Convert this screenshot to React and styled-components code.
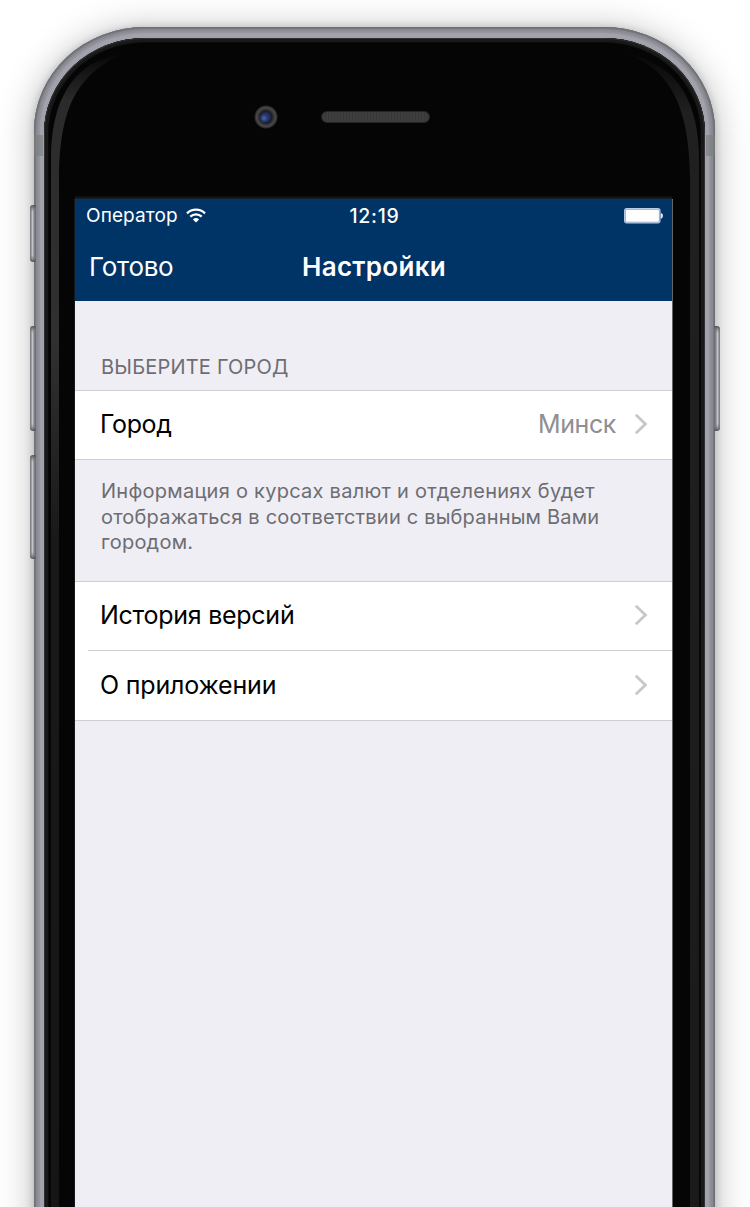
import React from "react";
import styled, { createGlobalStyle } from "styled-components";

const GlobalStyle = createGlobalStyle`
  * { box-sizing: border-box; }
  body { margin: 0; background: #fff; overflow: hidden; }
`;

const Stage = styled.main`
  height: 1207px;
  width: 750px;
  padding: 27px 35px 0 34px;
  overflow: hidden;
  font-family: Inter, "Liberation Sans", sans-serif;
`;

const Phone = styled.div`
  position: relative;
  height: 1400px;
  padding: 11px 10px 0;
  border-radius: 111px 111px 0 0 / 104px 104px 0 0;
  background: #a2a2ac;
  box-shadow:
    inset 0 0 0 1px #707077,
    inset 0 0 0 2px #77777f,
    inset 0 0 1px 4px #898991,
    inset 0 0 1px 6px #94949d,
    0 1px 8px rgba(0, 0, 0, 0.2),
    0 3px 36px rgba(0, 0, 0, 0.28);
`;

const Glass = styled.div`
  height: 100%;
  padding: 161px 33px 0 31px;
  border-radius: 101px 101px 0 0 / 95px 95px 0 0;
  background: #050505;
  box-shadow:
    inset 0 0 0 1px #303034,
    inset 0 0 0 4px #19191a,
    inset 0 0 1px 5px #0c0c0c;
`;

const Gloss = styled.svg`
  position: absolute;
  left: 0;
  top: 0;
  pointer-events: none;
`;

const SideButton = styled.i`
  position: absolute;
  ${(p) => (p.$right ? "right: -5px" : "left: -4px")};
  top: ${(p) => p.$top}px;
  width: 6px;
  height: ${(p) => p.$height}px;
  border-radius: ${(p) => (p.$right ? "1px 3px 3px 1px" : "3px 1px 1px 3px")};
  background:
    linear-gradient(#55555b, #77777e88 4px, transparent 7px calc(100% - 7px), #77777e88 calc(100% - 4px), #55555b),
    linear-gradient(${(p) => (p.$right ? "270deg" : "90deg")}, #77777e, #8a8a91 1px, #c4c4ca 2.5px, #88888f 4px, #66666d);
`;

const AntennaBand = styled.i`
  position: absolute;
  ${(p) => (p.$right ? "right: 0" : "left: 0")};
  top: 108px;
  width: 9px;
  height: 21px;
  background: rgba(120, 127, 124, 0.6);
`;

const Camera = styled.i`
  position: absolute;
  left: 220px;
  top: 78px;
  width: 24px;
  height: 24px;
  border-radius: 50%;
  background:
    radial-gradient(circle at 42% 55%, #5068a8 0, #33468899 3px, transparent 5px),
    radial-gradient(
      circle,
      #26366f 0,
      #222c55 4px,
      #191b2b 6px,
      #343336 7.5px,
      #4b4848 9.5px,
      #29292a 11px,
      #080808 12px
    );
`;

const Speaker = styled.i`
  position: absolute;
  left: 287px;
  top: 84px;
  width: 109px;
  height: 12px;
  border-radius: 6px;
  border: 1px solid #252525;
  background: repeating-linear-gradient(90deg, #373737 0 1px, #3e3e3e 1px 3px);
`;

const Screen = styled.section`
  height: 1100px;
  background: #efeef5;
  box-shadow: 0 -1px 0 #18212b, 1px 0 0 #66676b, -1px 0 0 #18191b, 0 -3px 0 #111;
`;

const NavBar = styled.header`
  height: 102px;
  background: #003366;
  color: #fff;
`;

const BarLine = styled.div`
  display: grid;
  grid-template-columns: 1fr auto 1fr;
  align-items: center;
  height: ${(p) => p.$height}px;
  padding: ${(p) => p.$pad};
`;

const Inline = styled.div`
  display: flex;
  align-items: center;
  gap: 8px;
  justify-self: ${(p) => p.$align || "start"};

  svg {
    margin-bottom: 2px;
  }
`;

const Label = styled.span`
  font-size: ${(p) => p.$size}px;
  font-weight: ${(p) => p.$weight || 400};
  letter-spacing: ${(p) => p.$track || 0}px;
  color: ${(p) => p.$color || "inherit"};
  white-space: nowrap;
  line-height: 1.2;
`;

const SectionTitle = styled.h2`
  height: 89px;
  margin: 0;
  padding: 54px 26px 0;
  font-size: 20px;
  font-weight: 400;
  line-height: 24px;
  letter-spacing: 0.2px;
  color: #6d6d72;
`;

const Group = styled.div`
  background: #fff;
  border-top: 1px solid #cfced4;
  border-bottom: 1px solid #cfced4;
`;

const Row = styled.div`
  display: flex;
  align-items: center;
  height: 68px;
  padding: 0 24px 2px 12px;
  margin-left: 13px;
  color: #000;
  & + & {
    height: 70px;
    padding-bottom: 1px;
    border-top: 1px solid #cfced4;
  }
`;

const RowEnd = styled.div`
  display: flex;
  align-items: center;
  gap: 18px;
  margin-left: auto;
`;

const Note = styled.p`
  height: 121px;
  margin: 0;
  padding: 19px 26px 0;
  font-size: 20px;
  line-height: 25.6px;
  color: #6d6d72;
`;

const NoteLine = styled.span`
  display: block;
  white-space: nowrap;
  letter-spacing: ${(p) => p.$track}px;
`;

const Wifi = () => (
  <svg width="20" height="15" viewBox="0 0 20 15" fill="none" stroke="#fff" strokeWidth="2.3">
    <path d="M1 5.3a13 13 0 0 1 18 0" />
    <path d="M4.3 8.7a8.4 8.4 0 0 1 11.4 0" />
    <path d="M10 14.5 6.9 11.4a4.5 4.5 0 0 1 6.2 0Z" fill="#fff" stroke="none" />
  </svg>
);

const Battery = () => (
  <svg width="39" height="16" viewBox="0 0 39 16">
    <rect x=".6" y=".6" width="35.4" height="14.3" rx="2.2" fill="#7897b8" stroke="#b9cce2" strokeWidth="1.1" />
    <rect x="1.7" y="1.7" width="33.2" height="12.1" rx="1" fill="#fff" />
    <path d="M36.8 5.2h.7q1.4.3 1.4 2.6t-1.4 2.6h-.7Z" fill="#e7eef6" />
  </svg>
);

const Chevron = () => (
  <svg width="14" height="22" viewBox="0 0 14 22" fill="none" stroke="#c7c7cc" strokeWidth="2.8">
    <path d="m1.8 1.8 9.6 9.2-9.6 9.2" />
  </svg>
);

export default function App() {
  return (
    <>
      <GlobalStyle />
      <Stage>
        <Phone>
          <SideButton $top={178} $height={57} />
          <SideButton $top={299} $height={105} />
          <SideButton $top={428} $height={104} />
          <SideButton $right $top={299} $height={105} />
          <Glass>
            <Screen>
              <NavBar>
                <BarLine $height={35} $pad="0 9px 0 11px">
                  <Inline>
                    <Label $size={19} $track={0.1}>Оператор</Label>
                    <Wifi />
                  </Inline>
                  <Label $size={19.5} $weight={500} $track={0.7}>12:19</Label>
                  <Inline $align="end"><Battery /></Inline>
                </BarLine>
                <BarLine $height={66} $pad="0 13px 0 14px">
                  <Label $size={26} $track={-0.3}>Готово</Label>
                  <Label $size={26} $weight={600} $track={0.3}>Настройки</Label>
                  <span />
                </BarLine>
              </NavBar>
              <SectionTitle>ВЫБЕРИТЕ ГОРОД</SectionTitle>
              <Group>
                <Row>
                  <Label $size={25} $track={-0.4}>Город</Label>
                  <RowEnd>
                    <Label $size={25} $track={-0.4} $color="#8e8e93">Минск</Label>
                    <Chevron />
                  </RowEnd>
                </Row>
              </Group>
              <Note>
                <NoteLine $track={0.26}>Информация о курсах валют и отделениях будет</NoteLine>
                <NoteLine $track={0.19}>отображаться в соответствии с выбранным Вами</NoteLine>
                <NoteLine $track={0.25}>городом.</NoteLine>
              </Note>
              <Group>
                <Row>
                  <Label $size={25} $track={-0.27}>История версий</Label>
                  <RowEnd><Chevron /></RowEnd>
                </Row>
                <Row>
                  <Label $size={25} $track={-0.17}>О приложении</Label>
                  <RowEnd><Chevron /></RowEnd>
                </Row>
              </Group>
            </Screen>
          </Glass>
          <Gloss width="681" height="1180" viewBox="0 0 681 1180">
            <defs>
              <linearGradient id="glossLeft" x1="0" y1="28" x2="0" y2="1180" gradientUnits="userSpaceOnUse">
                <stop offset="0" stopColor="#080808" />
                <stop offset=".04" stopColor="#2b2b2b" />
                <stop offset=".25" stopColor="#303030" />
                <stop offset=".42" stopColor="#191919" />
                <stop offset="1" stopColor="#151515" />
              </linearGradient>
              <linearGradient id="glossRight" x1="0" y1="28" x2="0" y2="1180" gradientUnits="userSpaceOnUse">
                <stop offset="0" stopColor="#080808" />
                <stop offset=".05" stopColor="#202020" />
                <stop offset="1" stopColor="#1a1a1a" />
              </linearGradient>
            </defs>
            <path d="M88 27C38 34 17 75 17 132V1180H25V150C26 78 44 48 88 27Z" fill="url(#glossLeft)" />
            <path d="M594 27C646 38 665 78 665 132V1180H656V150C655 78 636 44 594 27Z" fill="url(#glossRight)" />
          </Gloss>
          <AntennaBand />
          <AntennaBand $right />
          <Camera />
          <Speaker />
        </Phone>
      </Stage>
    </>
  );
}
